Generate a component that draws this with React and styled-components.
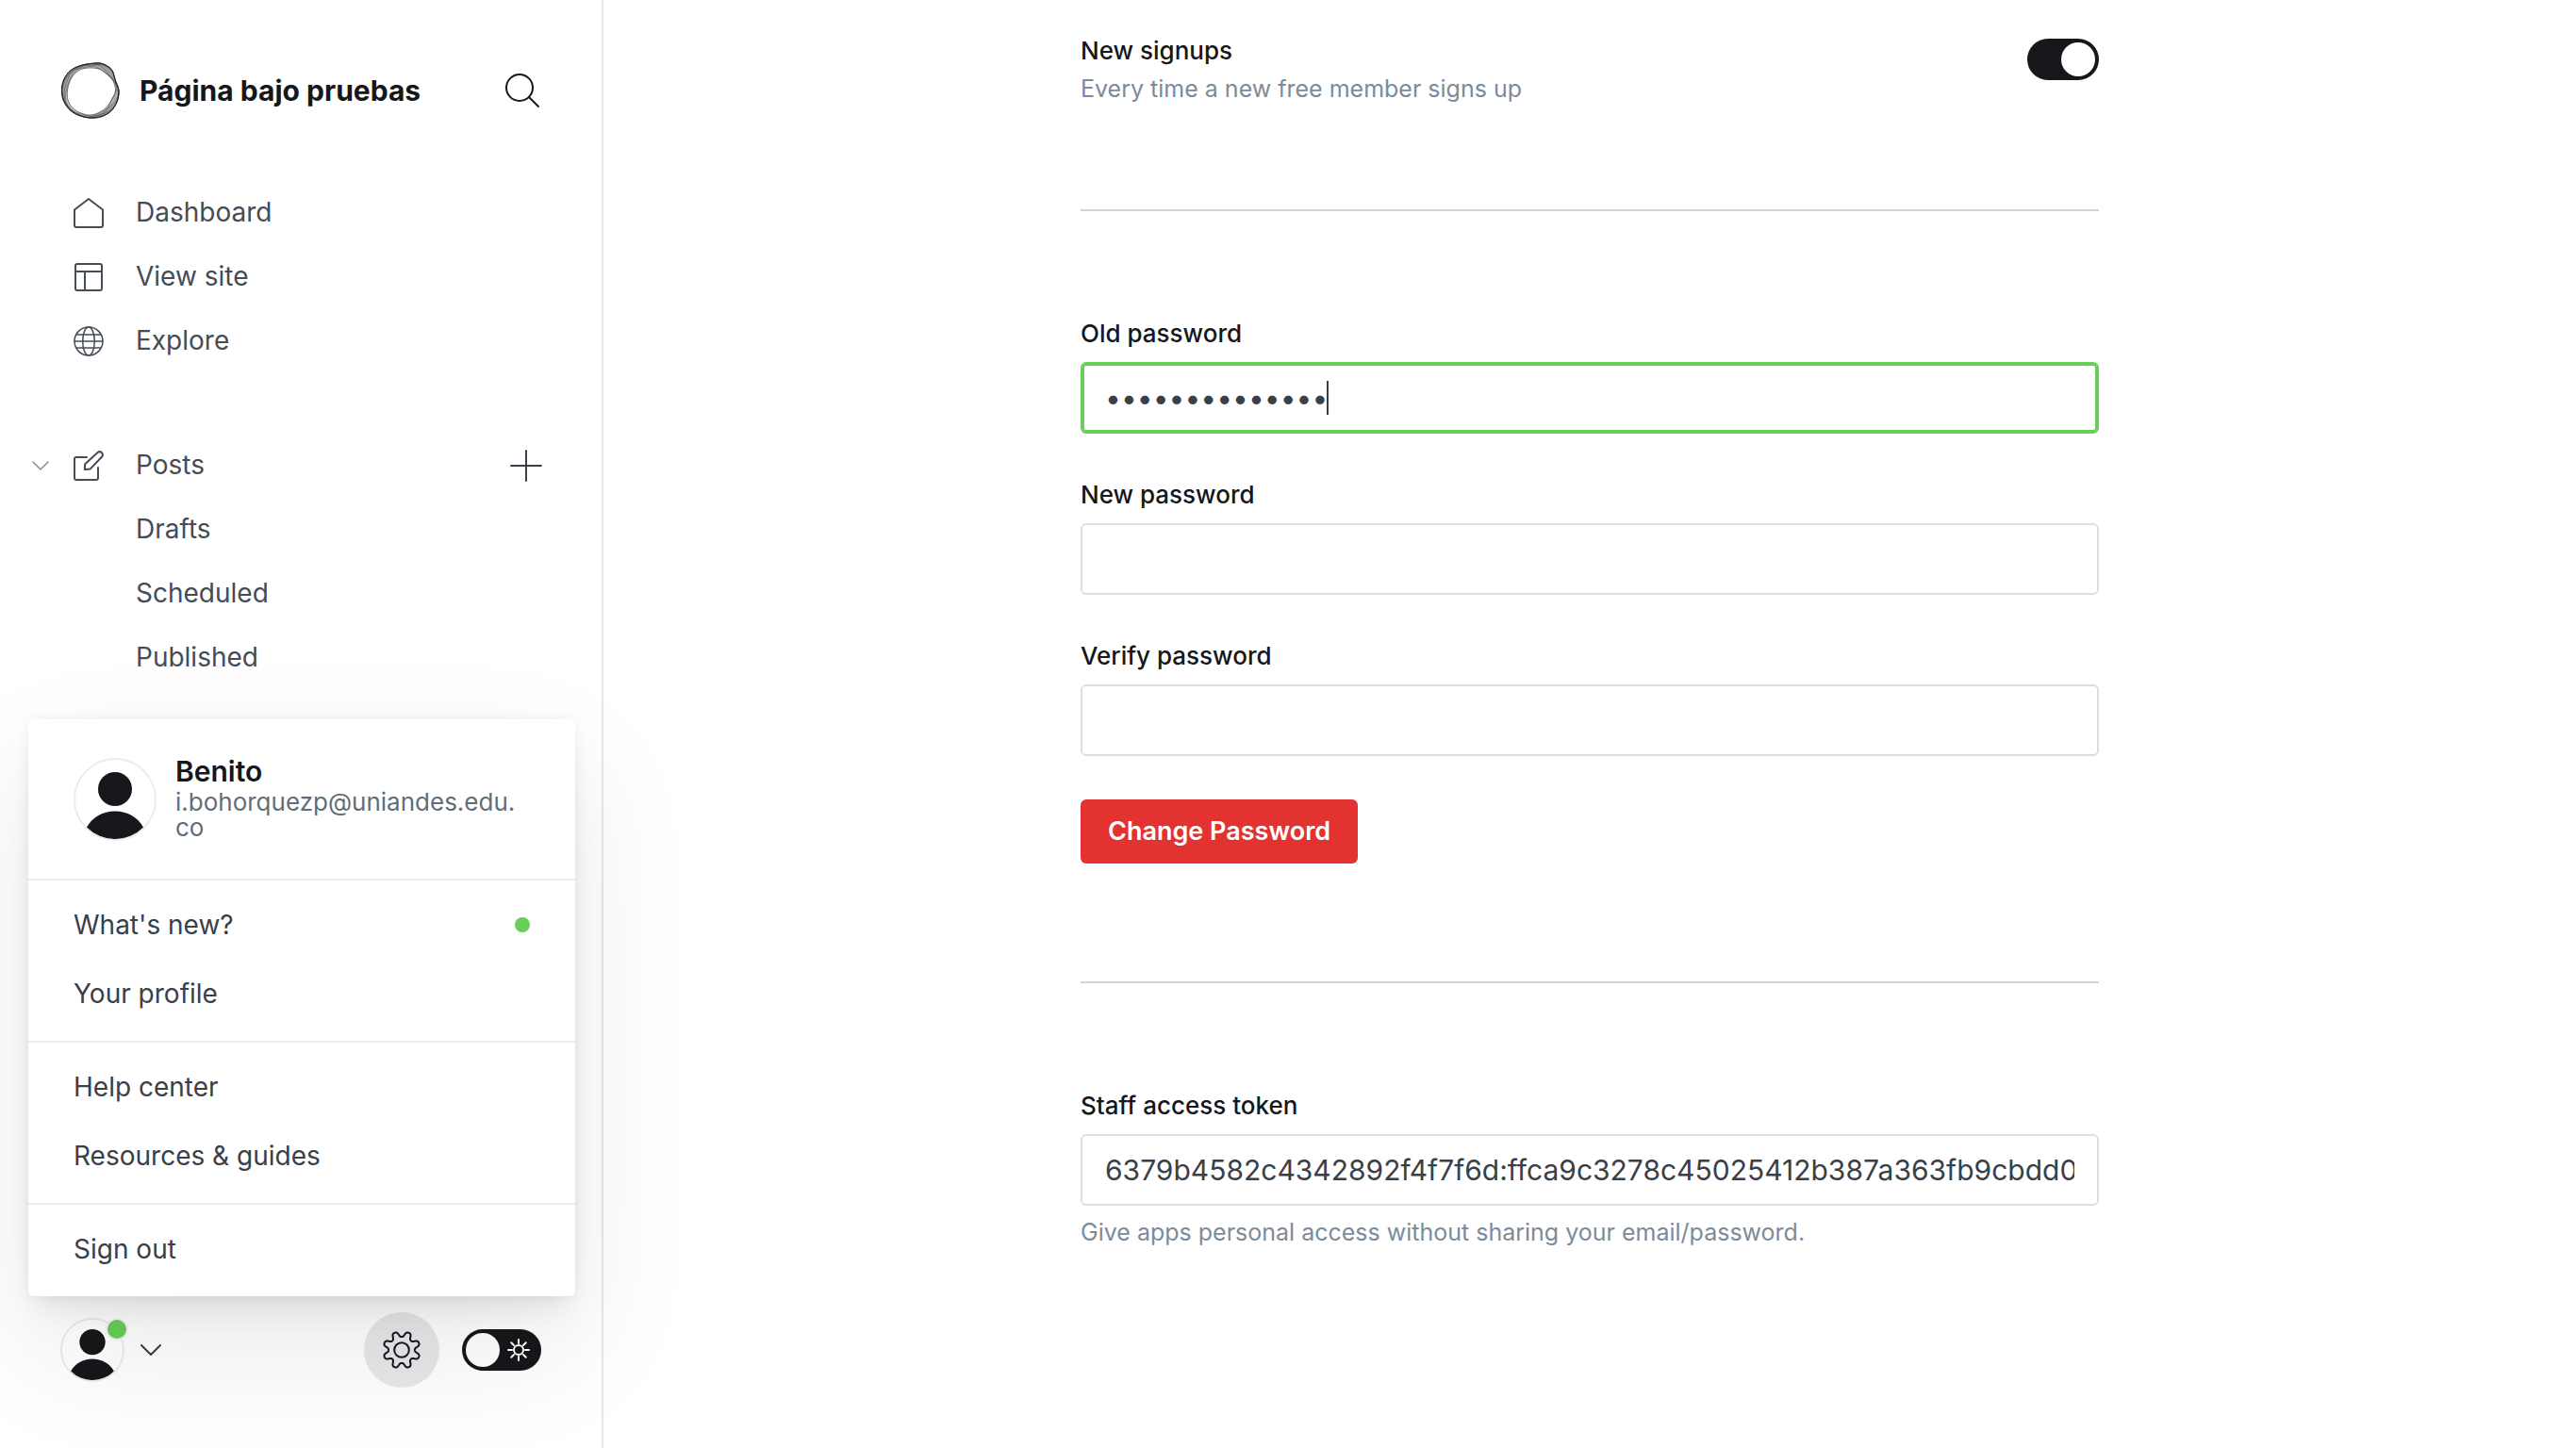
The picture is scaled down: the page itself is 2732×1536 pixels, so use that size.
import React from 'react';
import styled, { createGlobalStyle, css } from 'styled-components';

const color = {
  black: '#15171a',
  dark: '#394047',
  nav: '#454c55',
  mid: '#626d79',
  hint: '#7c8b9a',
  line: '#ced4d9',
  border: '#dddedf',
  green: '#68ce59',
  red: '#e23331',
};

const GlobalStyle = createGlobalStyle`
  *, *::before, *::after { box-sizing: border-box; }
  body {
    margin: 0;
    background: #fff;
    color: ${color.black};
    font-family: Inter, "Liberation Sans", sans-serif;
    font-size: 28px;
    line-height: 32px;
  }
  button, input { font: inherit; }
`;

const Page = styled.div`
  display: flex;
  min-height: 100vh;
`;

const Sidebar = styled.aside`
  position: sticky;
  top: 0;
  z-index: 1;
  display: flex;
  flex-direction: column;
  flex: 0 0 640px;
  height: 100vh;
  border-right: 2px solid #e6e7e9;
`;

const SiteHeader = styled.header`
  display: flex;
  align-items: center;
  gap: 20px;
  padding: 64px 65px 0 64px;
`;

const SiteName = styled.h1`
  flex: 1;
  margin: 0;
  font-size: 30px;
  font-weight: 700;
  line-height: 40px;
`;

const IconButton = styled.button`
  display: flex;
  align-items: center;
  justify-content: center;
  justify-self: start;
  padding: 0;
  border: 0;
  background: none;
  color: ${(p) => p.$color || color.black};
  cursor: pointer;
`;

const Nav = styled.nav`
  display: flex;
  flex-direction: column;
  gap: 64px;
  padding: 64px 63px 0 34px;
`;

const NavList = styled.ul`
  margin: 0;
  padding: 0;
  list-style: none;
`;

const NavRow = styled.li`
  display: grid;
  grid-template-columns: 44px 66px 1fr auto;
  align-items: center;
  height: 68px;
`;

const NavLink = styled.a`
  grid-column: 2 / 4;
  display: grid;
  grid-template-columns: 66px 1fr;
  align-items: center;
  color: ${color.nav};
  text-decoration: none;
`;

const NavLabel = styled.span`
  grid-column: 2;
  padding-bottom: 2px;
`;

const Footer = styled.footer`
  position: relative;
  display: flex;
  align-items: center;
  margin-top: auto;
  padding: 0 64px 64px;
`;

const UserButton = styled(IconButton)`
  position: relative;
  gap: 17px;
  margin-right: auto;
`;

const AvatarFrame = styled.span`
  display: flex;
  flex: none;
  width: ${(p) => p.$size}px;
  height: ${(p) => p.$size}px;
  border: 2px solid #ebeced;
  border-radius: 50%;
`;

const Dot = styled.span`
  width: ${(p) => p.$size}px;
  height: ${(p) => p.$size}px;
  border-radius: 50%;
  background: ${color.green};
`;

const UserBadge = styled(Dot)`
  position: absolute;
  top: 2px;
  left: 50px;
  box-shadow: 0 0 0 2px #f4f4f4;
`;

const SettingsButton = styled(IconButton)`
  width: 80px;
  height: 80px;
  margin-right: 24px;
  border-radius: 50%;
  background: #e6e8ea;
`;

const Switch = styled.label`
  position: relative;
  display: inline-flex;
  flex: none;
  align-items: center;
  justify-content: ${(p) => (p.$on ? 'flex-end' : 'space-between')};
  width: ${(p) => p.$width}px;
  height: 44px;
  padding: 4px;
  border-radius: 22px;
  background: ${color.black};
  color: #fff;
  cursor: pointer;
`;

const SwitchInput = styled.input`
  position: absolute;
  inset: 0;
  margin: 0;
  opacity: 0;
  cursor: pointer;
`;

const Knob = styled.span`
  width: 36px;
  height: 36px;
  border-radius: 50%;
  background: #fff;
`;

const SunSlot = styled.span`
  display: flex;
  padding-right: 8px;
`;

const Menu = styled.div`
  position: absolute;
  bottom: 161px;
  left: 30px;
  right: 28px;
  border-radius: 6px;
  background: #fff;
  box-shadow:
    0 0 14px rgba(0, 0, 0, 0.06),
    0 20px 28px -8px rgba(0, 0, 0, 0.08),
    0 54px 136px rgba(0, 0, 0, 0.09);
`;

const MenuProfile = styled.div`
  display: flex;
  align-items: center;
  gap: 20px;
  padding: 41px 48px 40px;
`;

const ProfileText = styled.div`
  flex: 1;
  min-width: 0;
`;

const ProfileName = styled.div`
  margin-bottom: 6px;
  font-size: 30px;
  font-weight: 600;
  line-height: 26px;
`;

const ProfileEmail = styled.div`
  color: ${color.mid};
  font-size: 26px;
  line-height: 27px;
  overflow-wrap: break-word;
`;

const MenuGroup = styled.div`
  padding: 10px 0 14px;
  border-top: 2px solid #ececed;
`;

const MenuItem = styled.a`
  display: flex;
  align-items: center;
  justify-content: space-between;
  height: 73px;
  padding: 0 48px;
  color: ${color.dark};
  text-decoration: none;
`;

const Main = styled.main`
  display: flex;
  flex: 1;
  justify-content: center;
  min-width: 0;
  padding: 38px 40px 64px;
`;

const Content = styled.div`
  flex: 1;
  max-width: 1080px;
`;

const SettingRow = styled.div`
  display: flex;
  align-items: flex-start;
  justify-content: space-between;
  padding-bottom: 112px;
`;

const SwitchSlot = styled.div`
  display: flex;
  padding-top: 3px;
`;

const Title = styled.label`
  display: block;
  font-size: 26px;
  font-weight: 500;
`;

const Hint = styled.p`
  margin: ${(p) => p.$gap}px 0 0;
  color: ${color.hint};
  font-size: 25px;
`;

const Divider = styled.hr`
  height: 2px;
  margin: 0;
  border: 0;
  background: ${color.line};
`;

const Section = styled.section`
  padding: 114px 0 ${(p) => p.$bottom || 0}px;
`;

const Fields = styled.div`
  display: flex;
  flex-direction: column;
  gap: 49px;
`;

const InputBox = styled.div`
  position: relative;
  margin-top: 14px;
`;

const TextInput = styled.input`
  display: block;
  width: 100%;
  height: 76px;
  padding: 0 24px;
  border: 2px solid ${color.border};
  border-radius: 6px;
  outline: none;
  background: #fff;
  color: ${color.dark};
  font-size: 30px;

  ${(p) =>
    p.$active &&
    css`
      border-color: ${color.green};
      box-shadow: inset 0 0 0 2px ${color.green};
      caret-color: transparent;
    `}
`;

const Caret = styled.span`
  position: absolute;
  top: 20px;
  width: 2px;
  height: 36px;
  background: ${color.dark};
  pointer-events: none;
`;

const Actions = styled.div`
  display: flex;
  margin-top: 46px;
`;

const SubmitButton = styled.button`
  height: 68px;
  padding: 0 29px;
  border: 0;
  border-radius: 6px;
  background: ${color.red};
  color: #fff;
  font-size: 27px;
  font-weight: 600;
  cursor: pointer;
`;

function Icon({ size = 32, width = 2, children }) {
  return (
    <svg
      width={size}
      height={size}
      viewBox={`0 0 ${size} ${size}`}
      fill="none"
      stroke="currentColor"
      strokeWidth={width}
      strokeLinecap="round"
      strokeLinejoin="round"
      aria-hidden="true"
    >
      {children}
    </svg>
  );
}

const HomeIcon = () => (
  <Icon>
    <path d="M1 12.5 16 1l15 11.5V29a2 2 0 0 1-2 2H3a2 2 0 0 1-2-2z" />
  </Icon>
);

const LayoutIcon = () => (
  <Icon>
    <rect x="2" y="2" width="28" height="28" rx="2" />
    <path d="M2 10h28M12 10v20" />
  </Icon>
);

const GlobeIcon = () => (
  <Icon width={1.5}>
    <circle cx="16" cy="16" r="15" />
    <ellipse cx="16" cy="16" rx="6.3" ry="15" />
    <path d="M1 16h30M3.3 9h25.4M3.3 23h25.4" />
  </Icon>
);

const EditIcon = () => (
  <Icon>
    <path d="M14 7H3a2 2 0 0 0-2 2v20a2 2 0 0 0 2 2h21a2 2 0 0 0 2-2V18" />
    <path d="M12.2 14.2 25.6 2a3.2 3.2 0 0 1 4.5 4.5L17.8 19.4l-6 .6z" />
  </Icon>
);

const SearchIcon = () => (
  <Icon size={38}>
    <circle cx="16" cy="16" r="14" />
    <path d="m26 26 10 10" />
  </Icon>
);

const PlusIcon = () => (
  <Icon size={34}>
    <path d="M17 1v32M1 17h32" />
  </Icon>
);

const SmallChevron = () => (
  <Icon size={18} width={1.5}>
    <path d="m1 5 8 8 8-8" />
  </Icon>
);

const Chevron = () => (
  <Icon size={22}>
    <path d="m1 6 10 10L21 6" />
  </Icon>
);

const SunIcon = () => (
  <Icon size={24}>
    <circle cx="12" cy="12" r="5" />
    <path d="M12 1v4M12 19v4M1 12h4M19 12h4M4.2 4.2 7 7M17 17l2.8 2.8M4.2 19.8 7 17M17 7l2.8-2.8" />
  </Icon>
);

// Eight rounded teeth traced as a polar curve around the hub.
const gearPath = (() => {
  const points = [];
  for (let i = 0; i < 240; i += 1) {
    const a = (i / 240) * Math.PI * 2;
    const wave = -Math.cos(8 * a);
    const r = 16.8 + 2.9 * (Math.tanh(1.5 * wave) / Math.tanh(1.5));
    points.push(`${(20 + r * Math.cos(a)).toFixed(2)} ${(20 + r * Math.sin(a)).toFixed(2)}`);
  }
  return `M${points.join('L')}Z`;
})();

const GearIcon = () => (
  <Icon size={40}>
    <path d={gearPath} />
    <circle cx="20" cy="20" r="7.8" />
  </Icon>
);

// Radii of the ring's outer and inner edge, clockwise from the right, every 22.5 degrees.
const outerEdge = [30, 30.5, 30.8, 30, 29, 29, 30, 30.5, 30.5, 30.5, 30, 28.5, 28.5, 31, 31.5, 28.5];
const innerEdge = [26.5, 24.5, 24.5, 25, 26, 26, 26.5, 26, 24.5, 24, 24.5, 24.5, 24, 24.5, 24.5, 26];

// How far each strand lies towards the outer edge at those angles.
const strandWeights = [
  [1, 0.7, 0.3, 0.2, 0.6, 1, 0.9, 0.7, 0.5, 0.4, 0.6, 0.8, 0.5, 0.1, 0, 0.4],
  [0.2, 0, 0.2, 0.6, 1, 0.8, 0.6, 0.8, 0.9, 0.8, 0.7, 0.3, 0.4, 0.8, 0.9, 0.8],
  [0.7, 1, 0.8, 0.5, 0.3, 0.4, 0.7, 0.5, 0.2, 0.1, 0.2, 0.6, 0.9, 0.5, 0.2, 0.3],
];

const closedCurve = (radii) => {
  const n = radii.length;
  const at = (i) => {
    const k = (i + n) % n;
    const a = (k / n) * Math.PI * 2;
    return [32 + radii[k] * Math.cos(a), 32 + radii[k] * Math.sin(a)];
  };
  let d = `M${at(0).map((v) => v.toFixed(2)).join(' ')}`;
  for (let i = 0; i < n; i += 1) {
    const [p0, p1, p2, p3] = [at(i - 1), at(i), at(i + 1), at(i + 2)];
    const c1 = [p1[0] + (p2[0] - p0[0]) / 6, p1[1] + (p2[1] - p0[1]) / 6];
    const c2 = [p2[0] - (p3[0] - p1[0]) / 6, p2[1] - (p3[1] - p1[1]) / 6];
    d += `C${[...c1, ...c2, ...p2].map((v) => v.toFixed(2)).join(' ')}`;
  }
  return `${d}Z`;
};

const outerCurve = closedCurve(outerEdge);
const innerCurve = closedCurve(innerEdge);
const strands = strandWeights.map((weights) =>
  closedCurve(weights.map((w, i) => innerEdge[i] + (outerEdge[i] - innerEdge[i]) * w)),
);

const Logo = () => (
  <svg width="64" height="64" viewBox="0 0 64 64" fill="none" stroke="#15171a" aria-hidden="true">
    <path d={outerCurve + innerCurve} fill="#15171a" fillOpacity="0.25" fillRule="evenodd" stroke="none" />
    <path d={outerCurve} strokeWidth="1" strokeOpacity="0.7" />
    <path d={innerCurve} strokeWidth="1" strokeOpacity="0.55" />
    {strands.map((d) => (
      <path
        key={d}
        d={d + outerCurve}
        fill="#15171a"
        fillOpacity="0.12"
        fillRule="evenodd"
        strokeWidth="0.8"
        strokeOpacity="0.45"
      />
    ))}
  </svg>
);

function Avatar({ size }) {
  return (
    <AvatarFrame $size={size}>
      <svg width="100%" height="100%" viewBox="0 0 84 84" fill="#15171a" aria-hidden="true">
        <circle cx="42" cy="31" r="18" />
        <path d="M12 71.4C18 61 29 54.5 42 54.5S66 61 72 71.4A42 42 0 0 1 12 71.4z" />
      </svg>
    </AvatarFrame>
  );
}

const siteLinks = [
  { label: 'Dashboard', icon: <HomeIcon /> },
  { label: 'View site', icon: <LayoutIcon /> },
  { label: 'Explore', icon: <GlobeIcon /> },
];

const postLinks = ['Drafts', 'Scheduled', 'Published'];

const menuGroups = [
  [{ label: "What's new?", unread: true }, { label: 'Your profile' }],
  [{ label: 'Help center' }, { label: 'Resources & guides' }],
  [{ label: 'Sign out' }],
];

const NavItem = ({ label, icon, before, after }) => (
  <NavRow>
    {before}
    <NavLink href="#">
      {icon}
      <NavLabel>{label}</NavLabel>
    </NavLink>
    {after}
  </NavRow>
);

function UserMenu() {
  return (
    <Menu>
      <MenuProfile>
        <Avatar size={88} />
        <ProfileText>
          <ProfileName>Benito</ProfileName>
          <ProfileEmail>
            i.bohorquezp@uniandes.edu.
            <wbr />
            co
          </ProfileEmail>
        </ProfileText>
      </MenuProfile>
      {menuGroups.map((group) => (
        <MenuGroup key={group[0].label}>
          {group.map((item) => (
            <MenuItem key={item.label} href="#">
              {item.label}
              {item.unread && <Dot $size={16} />}
            </MenuItem>
          ))}
        </MenuGroup>
      ))}
    </Menu>
  );
}

function Field({ id, label, hint, children, ...input }) {
  return (
    <div>
      <Title htmlFor={id}>{label}</Title>
      <InputBox>
        <TextInput id={id} {...input} />
        {children}
      </InputBox>
      {hint && <Hint $gap={12}>{hint}</Hint>}
    </div>
  );
}

const TEXT_START = 25;
const BULLET_WIDTH = 16.86;

function ActivePasswordField(props) {
  const [value, setValue] = React.useState('passwordsecret');
  const caretLeft = Math.round(TEXT_START + value.length * BULLET_WIDTH);
  return (
    <Field
      {...props}
      type="password"
      value={value}
      onChange={(e) => setValue(e.target.value)}
      autoFocus
      $active
    >
      <Caret style={{ left: caretLeft }} />
    </Field>
  );
}

export default function App() {
  const [signups, setSignups] = React.useState(true);
  const [night, setNight] = React.useState(false);

  return (
    <>
      <GlobalStyle />
      <Page>
        <Sidebar>
          <SiteHeader>
            <Logo />
            <SiteName>Página bajo pruebas</SiteName>
            <IconButton aria-label="Search">
              <SearchIcon />
            </IconButton>
          </SiteHeader>
          <Nav>
            <NavList>
              {siteLinks.map((link) => (
                <NavItem key={link.label} {...link} />
              ))}
            </NavList>
            <NavList>
              <NavItem
                label="Posts"
                icon={<EditIcon />}
                before={
                  <IconButton aria-label="Collapse posts" $color={color.hint}>
                    <SmallChevron />
                  </IconButton>
                }
                after={
                  <IconButton aria-label="New post" $color={color.dark}>
                    <PlusIcon />
                  </IconButton>
                }
              />
              {postLinks.map((label) => (
                <NavItem key={label} label={label} />
              ))}
            </NavList>
          </Nav>
          <Footer>
            <UserButton aria-label="Account menu" $color={color.dark}>
              <Avatar size={68} />
              <UserBadge $size={20} />
              <Chevron />
            </UserButton>
            <SettingsButton aria-label="Settings">
              <GearIcon />
            </SettingsButton>
            <Switch $width={84} $on={night}>
              <SwitchInput
                type="checkbox"
                aria-label="Night mode"
                checked={night}
                onChange={(e) => setNight(e.target.checked)}
              />
              <Knob />
              {!night && (
                <SunSlot>
                  <SunIcon />
                </SunSlot>
              )}
            </Switch>
            <UserMenu />
          </Footer>
        </Sidebar>
        <Main>
          <Content>
            <SettingRow>
              <div>
                <Title htmlFor="signups">New signups</Title>
                <Hint $gap={8}>Every time a new free member signs up</Hint>
              </div>
              <SwitchSlot>
                <Switch as="span" $width={76} $on={signups}>
                  <SwitchInput
                    id="signups"
                    type="checkbox"
                    checked={signups}
                    onChange={(e) => setSignups(e.target.checked)}
                  />
                  <Knob />
                </Switch>
              </SwitchSlot>
            </SettingRow>
            <Divider />
            <Section $bottom={125}>
              <form onSubmit={(e) => e.preventDefault()}>
                <Fields>
                  <ActivePasswordField id="old-password" label="Old password" />
                  <Field id="new-password" label="New password" type="password" />
                  <Field id="verify-password" label="Verify password" type="password" />
                </Fields>
                <Actions>
                  <SubmitButton>Change Password</SubmitButton>
                </Actions>
              </form>
            </Section>
            <Divider />
            <Section>
              <Field
                id="token"
                label="Staff access token"
                type="text"
                readOnly
                value="6379b4582c4342892f4f7f6d:ffca9c3278c45025412b387a363fb9cbdd0"
                hint="Give apps personal access without sharing your email/password."
              />
            </Section>
          </Content>
        </Main>
      </Page>
    </>
  );
}
